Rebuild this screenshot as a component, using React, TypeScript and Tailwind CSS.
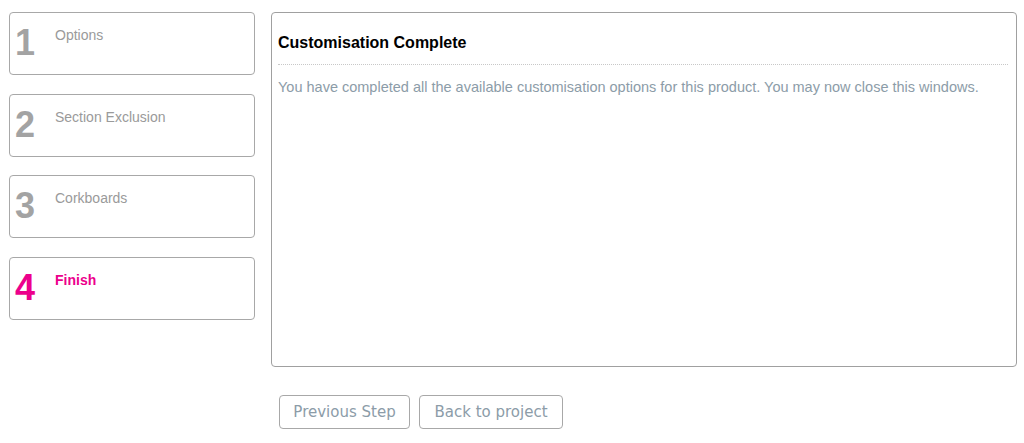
const steps = [
  { n: 1, label: "Options", active: false },
  { n: 2, label: "Section Exclusion", active: false },
  { n: 3, label: "Corkboards", active: false },
  { n: 4, label: "Finish", active: true },
];

const StepBox = ({ n, label, active }: { n: number; label: string; active: boolean }) => (
  <div className="flex h-[63px] w-[246px] rounded-[4px] border border-[#a8a8a8] bg-white">
    <span
      className={`ml-[5px] mt-[10px] w-[40px] text-[36px] font-bold leading-[40px] ${
        active ? "text-[#ec008c]" : "text-[#a3a3a3]"
      }`}
    >
      {n}
    </span>
    <span
      className={`mt-[13px] text-[14px] leading-[18px] ${
        active ? "font-bold text-[#ec008c]" : "text-[#9a9a9a]"
      }`}
    >
      {label}
    </span>
  </div>
);

export default function App() {
  return (
    <div className="flex h-[443px] w-[1024px] gap-[16px] bg-white pl-[9px] pt-[12px] font-['Liberation_Sans',Arial,sans-serif]">
      <div className="flex flex-col gap-[18.6px]">
        {steps.map((s) => (
          <StepBox key={s.n} {...s} />
        ))}
      </div>
      <div className="flex flex-col">
        <div className="h-[355px] w-[746px] rounded-[4px] border border-[#a0a0a0] px-[6px]">
          <h2 className="mt-[20px] pb-[11px] text-[16px] font-bold leading-[20px] text-black">
            Customisation Complete
          </h2>
          <div className="mr-[2px] border-t border-dotted border-[#c8c8c8]" />
          <p className="mt-[13px] text-[14.5px] leading-[18px] text-[#8c9ca8]">
            You have completed all the available customisation options for this product. You may now close this windows.
          </p>
        </div>
        <div className="ml-[8px] mt-[28px] flex gap-[9px] font-['DejaVu_Sans',Verdana,sans-serif]">
          <button className="h-[34px] w-[131px] rounded-[4px] border border-[#a8a8a8] bg-white text-[15px] text-[#8c9ca8]">
            Previous Step
          </button>
          <button className="h-[34px] w-[144px] rounded-[4px] border border-[#a8a8a8] bg-white text-[15px] text-[#8c9ca8]">
            Back to project
          </button>
        </div>
      </div>
    </div>
  );
}
